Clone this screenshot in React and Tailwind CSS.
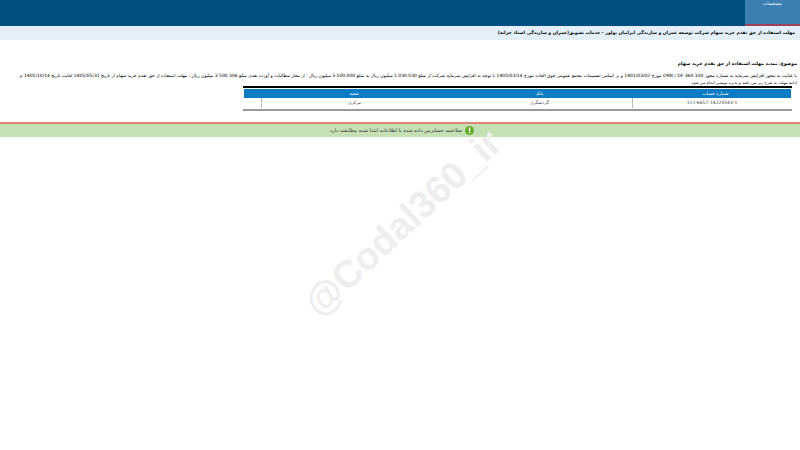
const FONT = "font-['DejaVu_Sans','Liberation_Sans',sans-serif]";

export default function App() {
  return (
    <div dir="rtl" className={`relative w-[800px] h-[450px] overflow-hidden bg-white text-black ${FONT}`}>
      {/* Top bar */}
      <div className="h-[26px] bg-[#004f82] flex">
        <div className="w-[55px] h-[26px] bg-[#3b7fb3] border-b-2 border-[#a0405a] text-center text-[4.5px] leading-[7px] text-white">
          مشخصات
        </div>
      </div>

      {/* Title */}
      <div className="h-[14px] bg-[#e3f0f9] pr-[5px] text-[4.5px] leading-[14px] font-bold whitespace-nowrap">
        مهلت استفاده از حق تقدم خرید سهام شرکت توسعه عمران و سازندگی ایرانیان بولور - خدمات تشویق(عمران و سازندگی اسناد خزانه)
      </div>

      <div className="pt-[21px] pr-[3px] leading-[6px]">
        <p className="font-bold h-[12px] text-[4.6px] whitespace-nowrap">موضوع: تمدید مهلت استفاده از حق تقدم خرید سهام</p>
        <p className="whitespace-nowrap h-[7px] text-[4.5px]">
          با عنایت به مجوز افزایش سرمایه به شماره مجوز DRN / DF 360 330 مورخ 1401/03/02 و بر اساس تصمیمات مجمع عمومی فوق العاده مورخ 1405/03/14 با توجه به افزایش سرمایه شرکت از مبلغ 1.030.030 میلیون ریال به مبلغ 3.500.000 میلیون ریال ؛ از محل مطالبات و آورده نقدی مبلغ 306 500 3 میلیون ریال ، مهلت استفاده از حق تقدم خرید سهام از تاریخ 1405/05/31 لغایت تاریخ 1405/10/14 م
        </p>
        <p className="whitespace-nowrap h-[6px] text-[4px]">ادامه مهلت به شرح زیر می باشد و پذیره نویسی انجام می شود</p>
      </div>

      {/* Table */}
      <div className="mr-[8px] w-[549px] h-[25px] border-t-2 border-b-2 border-t-black border-b-[#999999] pt-[1px] px-[1px]">
        <div className="flex h-[9px] bg-[#0a7cc4] text-white text-[4.5px] leading-[9px] text-center">
          <div className="w-[159px] pl-[8px]">شماره حساب</div>
          <div className="w-[185px]">بانک</div>
          <div className="w-[186px]">شعبه</div>
        </div>
        <div className="flex h-[10px] text-[#444] text-[4.5px] leading-[10px] text-center">
          <div className="w-[159px] border-l border-[#bbbbbb]">111-6657-14220543-1</div>
          <div className="w-[185px]">گردشگری</div>
          <div className="w-[186px] border-l border-[#bbbbbb]">مرکزی</div>
        </div>
      </div>

      {/* Notice */}
      <div className="mt-[11px] h-[15px] bg-[#c4e0b4] border-t-2 border-[#dc8572] flex items-center justify-center gap-[3px] pl-[4px] text-[5px] text-[#333]">
        <svg width="9" height="9" viewBox="0 0 9 9" className="shrink-0">
          <circle cx="4.5" cy="4.5" r="4.5" fill="#6aab2a" />
          <rect x="3.9" y="1.6" width="1.3" height="3.8" fill="#fff" />
          <rect x="3.9" y="6" width="1.3" height="1.3" fill="#fff" />
        </svg>
        <span>صلاحیت حسابرس داده شده با اطلاعات ابتدا شده مطابقت دارد</span>
      </div>

      {/* Watermark */}
      <div
        dir="ltr"
        className="absolute left-[403px] top-[223px] -translate-x-1/2 -translate-y-1/2 -rotate-[43deg] whitespace-nowrap text-[38px] font-bold text-[#eeeeee] font-['Liberation_Sans',sans-serif] pointer-events-none"
      >
        @Codal360_ir
      </div>
    </div>
  );
}
